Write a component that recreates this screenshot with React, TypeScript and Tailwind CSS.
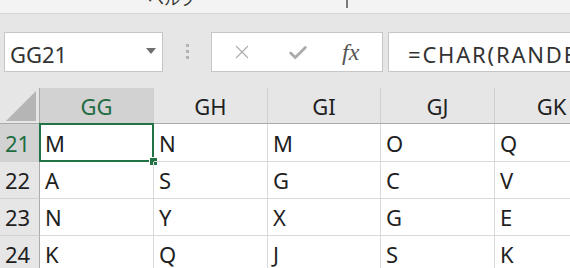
import { X, Check } from "lucide-react";

const cols = ["GG", "GH", "GI", "GJ", "GK"];
const rows = [
  { n: 21, h: "h-[38px]", v: ["M", "N", "M", "O", "Q"] },
  { n: 22, h: "h-[37px]", v: ["A", "S", "G", "C", "V"] },
  { n: 23, h: "h-[37px]", v: ["N", "Y", "X", "G", "E"] },
  { n: 24, h: "h-[37px]", v: ["K", "Q", "J", "S", "K"] },
];
const colW = ["w-[114px]", "w-[114px]", "w-[113px]", "w-[114px]", "w-[114px]"];

export default function App() {
  return (
    <div className="flex h-[268px] w-[570px] flex-col overflow-hidden bg-white font-['Noto_Sans','Noto_Sans_CJK_JP',sans-serif] text-[#1f1f1f]">
      {/* ribbon tab strip, mostly scrolled off */}
      <div className="flex h-[14px] shrink-0 items-start overflow-hidden border-b border-[#d4d4d4] bg-[#f3f3f3]">
        <span className="ml-[148px] mt-[-9px] text-[16px] leading-none text-[#333]">ヘルプ</span>
        <span className="ml-[150px] h-[8px] w-[2px] bg-[#7a7a7a]" />
      </div>

      {/* name box + formula bar */}
      <div className="flex h-[74px] shrink-0 items-start bg-[#e6e6e6] pt-[18px]">
        <div className="ml-[4px] flex h-[40px] w-[159px] items-center justify-between border border-[#c6c6c6] bg-white pl-[5px] pr-[6px]">
          <span className="mt-[3px] text-[22px] leading-none text-[#333]">GG21</span>
          <svg width="10" height="6" viewBox="0 0 10 6" className="mt-[-2px]">
            <path d="M0 0h10L5 6z" fill="#6e6e6e" />
          </svg>
        </div>
        <div className="flex w-[48px] flex-col items-center gap-[3px] pt-[12px]">
          <span className="h-[3px] w-[3px] bg-[#b3b3b3]" />
          <span className="h-[3px] w-[3px] bg-[#b3b3b3]" />
          <span className="h-[3px] w-[3px] bg-[#b3b3b3]" />
        </div>
        <div className="flex h-[40px] w-[172px] items-center border border-[#c6c6c6] bg-white">
          <X className="ml-[19px] h-[22px] w-[22px] text-[#acacac]" strokeWidth={1.3} />
          <Check className="ml-[34px] mt-[2px] h-[22px] w-[22px] text-[#acacac]" strokeWidth={3.2} />
          <span className="ml-[33px] font-['Liberation_Serif',serif] text-[24px] italic leading-none text-[#555]">fx</span>
        </div>
        <div className="ml-[5px] flex h-[40px] flex-1 items-center overflow-hidden whitespace-nowrap border border-[#c6c6c6] border-r-0 bg-white pl-[19px]">
          <span className="mt-[3px] text-[22px] leading-none tracking-[1.8px] text-[#333]">=CHAR(RANDBETWEEN(65,90))</span>
        </div>
      </div>

      {/* column headers */}
      <div className="flex h-[36px] shrink-0 border-b border-[#ababab] bg-[#e6e6e6]">
        <div className="relative w-[40px] shrink-0 border-r border-[#ababab]">
          <svg width="30" height="30" viewBox="0 0 30 30" className="absolute bottom-[2px] right-[3px]">
            <path d="M30 0V30H0z" fill="#b5b5b5" />
          </svg>
        </div>
        {cols.map((c, i) => (
          <div
            key={c}
            className={`${colW[i]} flex shrink-0 items-center justify-center border-r border-[#d0d0d0] text-[22px] leading-none ${
              i === 0 ? "bg-[#d2d2d2] text-[#1e6c41]" : "text-[#1f1f1f]"
            }`}
          >
            {c}
          </div>
        ))}
      </div>

      {/* rows */}
      {rows.map((r, ri) => (
        <div key={r.n} className={`flex ${r.h} shrink-0`}>
          <div
            className={`flex w-[40px] shrink-0 items-center justify-center border-b border-r border-[#ababab] border-b-[#d0d0d0] pr-[4px] text-[22px] leading-none ${
              ri === 0 ? "bg-[#d2d2d2] text-[#1e6c41]" : "bg-[#e6e6e6] text-[#1f1f1f]"
            }`}
          >
            {r.n}
          </div>
          {r.v.map((v, ci) => (
            <div
              key={ci}
              className={`${colW[ci]} relative flex shrink-0 items-center border-b border-r border-[#dadada] pl-[5px] text-[22px] leading-none`}
            >
              {v}
              {ri === 0 && ci === 0 && (
                <>
                  <div className="absolute -left-[1px] -top-[1px] bottom-[-1px] right-[-1px] border-2 border-[#217346]" />
                  <div className="absolute -bottom-[5px] -right-[5px] h-[9px] w-[9px] border border-white bg-[#217346]" />
                </>
              )}
            </div>
          ))}
        </div>
      ))}
    </div>
  );
}
